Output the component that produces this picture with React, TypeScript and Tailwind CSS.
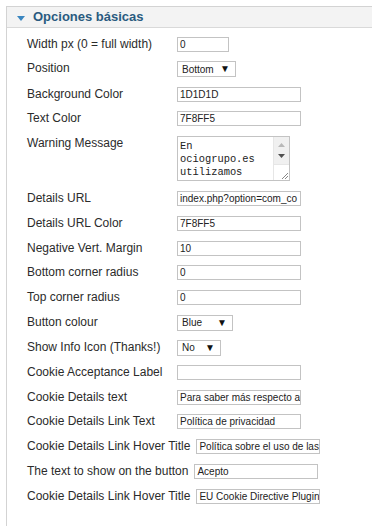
import { ReactNode } from 'react';

type Field =
  | { kind: 'input'; label: string; value: string; width: string }
  | { kind: 'select'; label: string; value: string; width: string }
  | { kind: 'textarea'; label: string; lines: string[] };

const fields: Field[] = [
  { kind: 'input', label: 'Width px (0 = full width)', value: '0', width: 'w-[52px]' },
  { kind: 'select', label: 'Position', value: 'Bottom', width: 'w-[59px]' },
  { kind: 'input', label: 'Background Color', value: '1D1D1D', width: 'w-[124px]' },
  { kind: 'input', label: 'Text Color', value: '7F8FF5', width: 'w-[124px]' },
  { kind: 'textarea', label: 'Warning Message', lines: ['En', 'ociogrupo.es', 'utilizamos'] },
  { kind: 'input', label: 'Details URL', value: 'index.php?option=com_co', width: 'w-[124px]' },
  { kind: 'input', label: 'Details URL Color', value: '7F8FF5', width: 'w-[124px]' },
  { kind: 'input', label: 'Negative Vert. Margin', value: '10', width: 'w-[124px]' },
  { kind: 'input', label: 'Bottom corner radius', value: '0', width: 'w-[124px]' },
  { kind: 'input', label: 'Top corner radius', value: '0', width: 'w-[124px]' },
  { kind: 'select', label: 'Button colour', value: 'Blue', width: 'w-[56px]' },
  { kind: 'select', label: 'Show Info Icon (Thanks!)', value: 'No', width: 'w-[44px]' },
  { kind: 'input', label: 'Cookie Acceptance Label', value: '', width: 'w-[124px]' },
  { kind: 'input', label: 'Cookie Details text', value: 'Para saber más respecto a', width: 'w-[124px]' },
  { kind: 'input', label: 'Cookie Details Link Text', value: 'Política de privacidad', width: 'w-[124px]' },
  { kind: 'input', label: 'Cookie Details Link Hover Title', value: 'Política sobre el uso de las', width: 'w-[124px]' },
  { kind: 'input', label: 'The text to show on the button', value: 'Acepto', width: 'w-[124px]' },
  { kind: 'input', label: 'Cookie Details Link Hover Title', value: 'EU Cookie Directive Plugin', width: 'w-[124px]' },
];

function Control({ field }: { field: Field }): ReactNode {
  if (field.kind === 'input') {
    return (
      <div
        className={`${field.width} h-[15px] border border-[#c3c3c3] bg-white px-[2px] text-[10px] leading-[13px] text-[#222] whitespace-nowrap overflow-hidden`}
      >
        {field.value}
      </div>
    );
  }
  if (field.kind === 'select') {
    return (
      <div
        className={`${field.width} h-[16px] border border-[#c3c3c3] bg-white pl-[4px] pr-[5px] flex items-center justify-between text-[10px] text-[#222]`}
      >
        <span>{field.value}</span>
        <span className="text-[10px] leading-[10px] text-[#111]">▼</span>
      </div>
    );
  }
  return (
    <div className="w-[113px] h-[45px] border border-[#c3c3c3] bg-white flex">
      <div className="flex-1 pl-[2px] pt-[3px] font-['Liberation_Mono',monospace] text-[10.4px] leading-[12.8px] text-[#222] overflow-hidden whitespace-nowrap">
        {field.lines.map((l) => (
          <div key={l}>{l}</div>
        ))}
      </div>
      {/* scrollbar */}
      <div className="w-[16px] flex flex-col border-l border-[#e6e6e6]">
        <div className="h-[27px] bg-[#f0f0f0] flex flex-col items-center justify-around py-[2px]">
          <svg width="7" height="4" viewBox="0 0 7 4">
            <path d="M0 4 L3.5 0 L7 4 Z" fill="#b8b8b8" />
          </svg>
          <svg width="7" height="4" viewBox="0 0 7 4">
            <path d="M0 0 L7 0 L3.5 4 Z" fill="#505050" />
          </svg>
        </div>
        <div className="flex-1 bg-white border-t border-[#e6e6e6] flex items-end justify-end p-[1px]">
          <svg width="7" height="7" viewBox="0 0 7 7">
            <path d="M1 7 L7 1 M4 7 L7 4" stroke="#888" strokeWidth="1" />
          </svg>
        </div>
      </div>
    </div>
  );
}

export default function App() {
  return (
    <div className="w-[372px] h-[526px] bg-white pt-[6px] pl-[6px] overflow-hidden font-['Liberation_Sans',Arial,sans-serif]">
      <div className="h-full border-l border-t border-[#d3d3d3]">
        {/* Header */}
        <div className="h-[21px] bg-[#f3f3f3] border-b border-[#d9d9d9] flex items-center pl-[10px] gap-[8px]">
          <svg width="8" height="5" viewBox="0 0 8 5" className="mt-[2px]">
            <path d="M0 0 L8 0 L4 5 Z" fill="#3a86c0" />
          </svg>
          <span className="text-[13px] font-bold text-[#2a5b80] leading-[16px]">Opciones básicas</span>
        </div>

        {/* Fields */}
        <div className="pt-[4px] pl-[20px]">
          {fields.map((f, i) => (
            <div
              key={i}
              className={`flex items-start ${f.kind === 'select' ? 'py-[4.5px]' : 'py-[4.9px]'}`}
            >
              <div className="min-w-[144px] mr-[6px] text-[12px] leading-[15px] text-[#2b2b2b] whitespace-nowrap">
                {f.label}
              </div>
              <Control field={f} />
            </div>
          ))}
        </div>
      </div>
    </div>
  );
}
